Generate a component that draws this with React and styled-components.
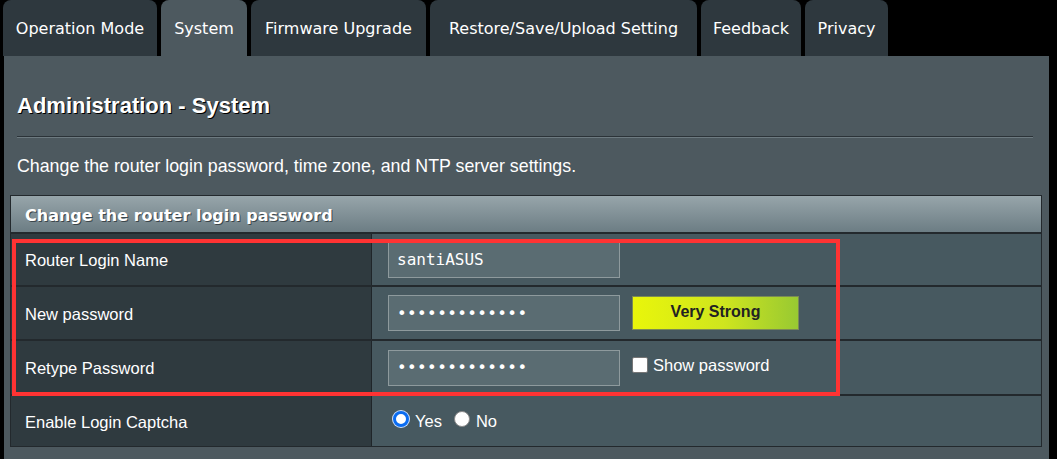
import React from 'react';
import styled, { createGlobalStyle } from 'styled-components';

const Global = createGlobalStyle`
	html, body {
		margin: 0;
		padding: 0;
		background: #000;
	}
	body {
		font-family: "Liberation Sans", Arial, sans-serif;
		color: #fff;
	}
`;

const Page = styled.div`
	width: 1057px;
	height: 459px;
	overflow: hidden;
	padding-left: 3px;
	box-sizing: border-box;
`;

const TabBar = styled.div`
	display: flex;
	gap: 4px;
	height: 56px;
`;

const Tab = styled.div`
	display: flex;
	align-items: center;
	justify-content: center;
	width: ${(p) => p.w}px;
	padding-top: 1px;
	border-radius: 8px 8px 0 0;
	background: ${(p) => (p.active ? '#4d595f' : '#2e383e')};
	font-family: "DejaVu Sans", Verdana, sans-serif;
	font-size: 16px;
	color: #fff;
	white-space: nowrap;
`;

const Panel = styled.div`
	margin-left: 1px;
	width: 1045px;
	height: 403px;
	background: #4d595f;
	padding: 38px 6px 0 6px;
	box-sizing: border-box;
`;

const Title = styled.div`
	margin-left: 7px;
	font-size: 22px;
	font-weight: bold;
	color: #fff;
	text-shadow: 1px 1px 0 #000;
	line-height: 24px;
`;

const Divider = styled.div`
	margin: 18px 10px 0 7px;
	height: 1px;
	background: #2b3338;
	border-bottom: 1px solid #6d7a80;
`;

const Description = styled.div`
	margin: 18px 0 0 7px;
	font-size: 17.8px;
	line-height: 20px;
	color: #fff;
`;

const Table = styled.div`
	position: relative;
	margin-top: 19px;
	width: 1032px;
	border: 1px solid #23292d;
	box-sizing: border-box;
`;

const Header = styled.div`
	height: 38px;
	box-sizing: border-box;
	display: flex;
	align-items: center;
	padding: 3px 0 0 14px;
	background: linear-gradient(#97a5aa, #6c7d84);
	border-bottom: 2px solid #23292d;
	font-family: "DejaVu Sans", Verdana, sans-serif;
	font-size: 16px;
	font-weight: bold;
	color: #fff;
	text-shadow: 1px 1px 0 #3b464b;
`;

const Row = styled.div`
	display: grid;
	grid-template-columns: 361px 1fr;
	height: ${(p) => p.h}px;
	border-bottom: ${(p) => (p.last ? 'none' : '2px solid #23292d')};
`;

const Label = styled.div`
	display: flex;
	align-items: center;
	padding: 2px 0 0 14px;
	background: #2f3a3f;
	border-right: 1px solid #1f2529;
	font-size: 16.5px;
	color: #fff;
`;

const Value = styled.div`
	display: flex;
	align-items: center;
	gap: 12px;
	padding-left: 16px;
	background: #475960;
	font-size: 16.5px;
	color: #fff;
`;

const Input = styled.div`
	width: 232px;
	height: 36px;
	box-sizing: border-box;
	display: flex;
	align-items: center;
	padding-left: 8px;
	background: #5a6c72;
	border: 1px solid #8e9a9d;
	font-family: "DejaVu Sans Mono", "Liberation Mono", monospace;
	font-size: 16px;
	color: #fff;
	letter-spacing: ${(p) => (p.dots ? '0.4px' : '0')};
`;

const Strength = styled.div`
	width: 167px;
	height: 34px;
	box-sizing: border-box;
	display: flex;
	align-items: center;
	justify-content: center;
	border: 1px solid #7a8a55;
	background: linear-gradient(90deg, #e9f60a, #cfe51e 55%, #98c932);
	font-size: 16px;
	font-weight: bold;
	color: #222;
	padding-bottom: 3px;
`;

const CheckLabel = styled.label`
	display: flex;
	align-items: center;
	gap: 5px;
	margin-bottom: 4px;
`;

const CheckBox = styled.span`
	width: 14px;
	height: 14px;
	background: #fff;
	border: 1px solid #767676;
	border-radius: 2px;
	margin-bottom: 2px;
`;

const RadioGroup = styled.div`
	display: flex;
	align-items: center;
	margin-left: 5px;
`;

const Radio = styled.span`
	width: 16px;
	height: 16px;
	border-radius: 50%;
	box-sizing: border-box;
	background: #fff;
	border: ${(p) => (p.on ? '3px solid #0b6cf0' : '1px solid #8a8a8a')};
	box-shadow: ${(p) => (p.on ? '0 0 0 1px #cfe2fb' : 'none')};
	margin-bottom: 4px;
`;

const RadioText = styled.span`
	margin: 0 12px 0 6px;
`;

const Highlight = styled.div`
	position: absolute;
	left: 1px;
	top: 43px;
	width: 828px;
	height: 157px;
	border: 4px solid #ff3333;
	box-sizing: border-box;
	pointer-events: none;
`;

const tabs = [
	{ label: 'Operation Mode', w: 154 },
	{ label: 'System', w: 86 },
	{ label: 'Firmware Upgrade', w: 175 },
	{ label: 'Restore/Save/Upload Setting', w: 267 },
	{ label: 'Feedback', w: 100 },
	{ label: 'Privacy', w: 83 },
];

const dots = '•••••••••••••';

export default function App() {
	return (
		<>
			<Global />
			<Page>
				<TabBar>
					{tabs.map((t) => (
						<Tab key={t.label} w={t.w} active={t.label === 'System'}>
							{t.label}
						</Tab>
					))}
				</TabBar>
				<Panel>
					<Title>Administration - System</Title>
					<Divider />
					<Description>
						Change the router login password, time zone, and NTP server settings.
					</Description>
					<Table>
						<Header>Change the router login password</Header>
						<Row h={51}>
							<Label>Router Login Name</Label>
							<Value>
								<Input>santiASUS</Input>
							</Value>
						</Row>
						<Row h={52}>
							<Label>New password</Label>
							<Value>
								<Input dots>{dots}</Input>
								<Strength>Very Strong</Strength>
							</Value>
						</Row>
						<Row h={53}>
							<Label>Retype Password</Label>
							<Value>
								<Input dots>{dots}</Input>
								<CheckLabel>
									<CheckBox />
									Show password
								</CheckLabel>
							</Value>
						</Row>
						<Row h={50} last>
							<Label>Enable Login Captcha</Label>
							<Value>
								<RadioGroup>
									<Radio on />
									<RadioText>Yes</RadioText>
									<Radio />
									<RadioText>No</RadioText>
								</RadioGroup>
							</Value>
						</Row>
						<Highlight />
					</Table>
				</Panel>
			</Page>
		</>
	);
}
